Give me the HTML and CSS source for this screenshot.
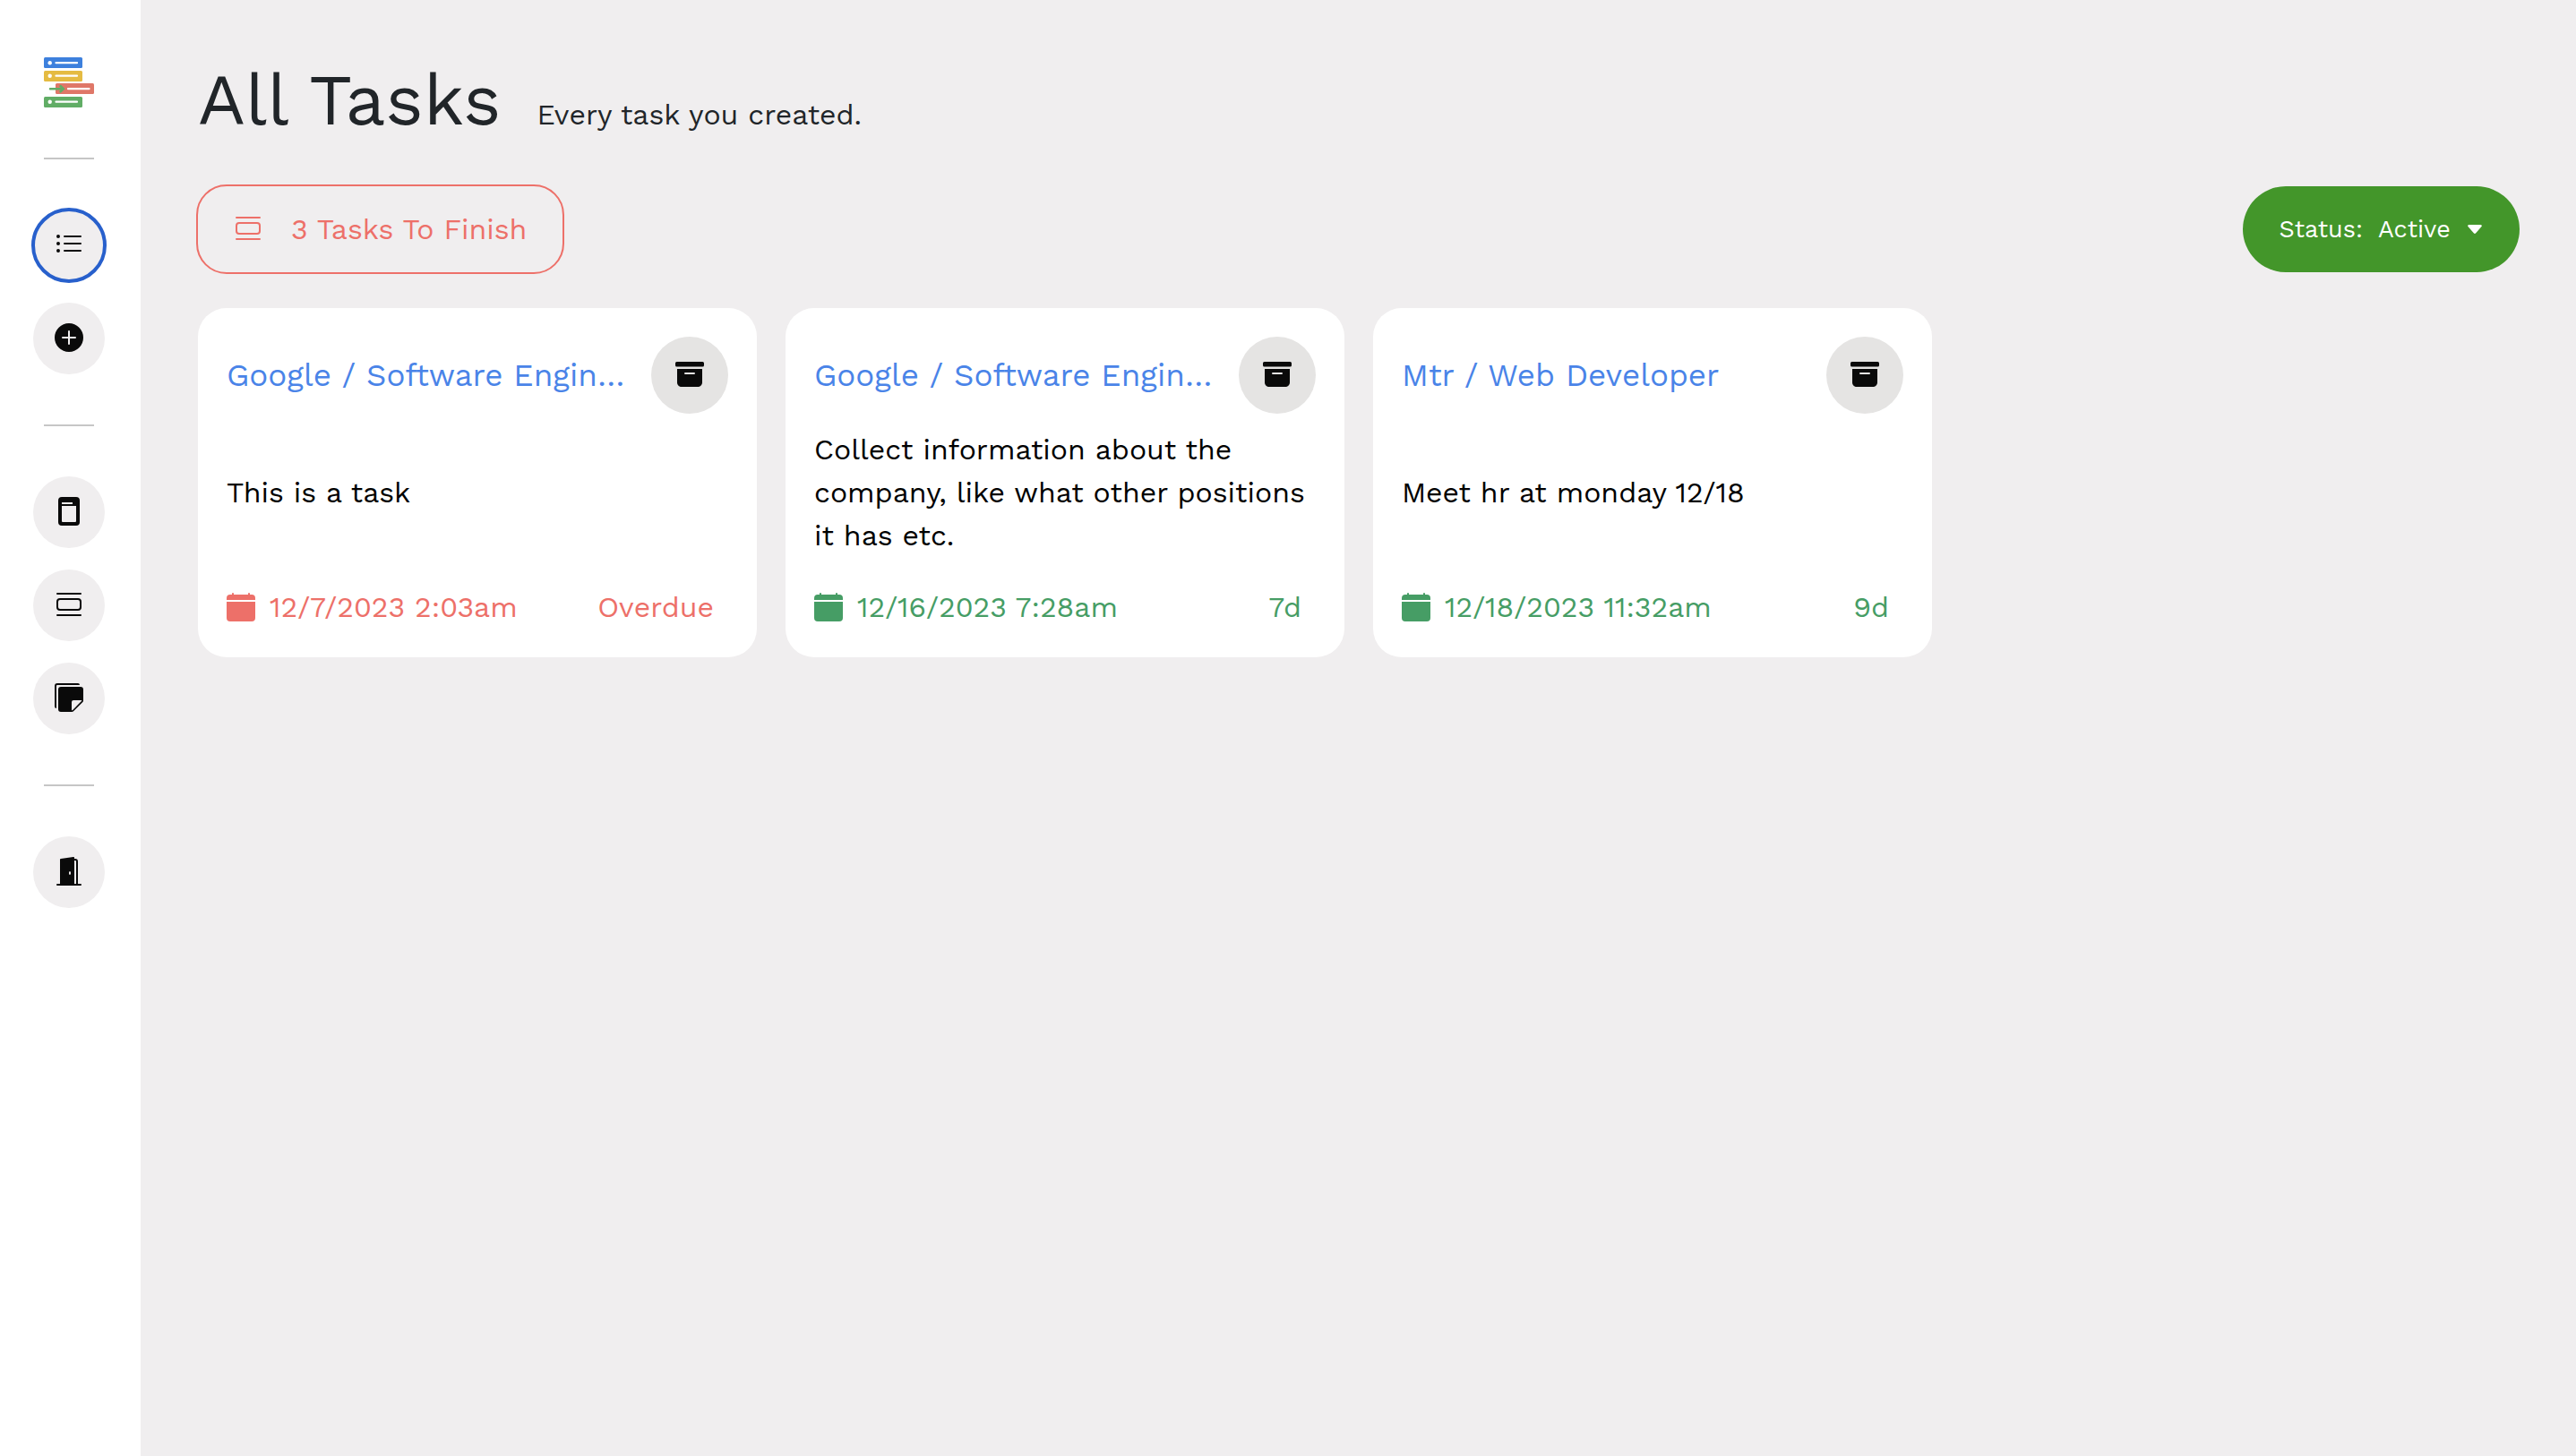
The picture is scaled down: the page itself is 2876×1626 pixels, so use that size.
FILE: index.html
```html
<!DOCTYPE html>
<html lang="en">
<head>
<meta charset="utf-8">
<meta name="viewport" content="width=device-width, initial-scale=1">
<title>All Tasks</title>
<link rel="stylesheet" href="styles.css">
</head>
<body>
<svg class="sprite" aria-hidden="true">
  <symbol id="i-list" viewBox="0 0 16 16"><path fill-rule="evenodd" d="M5 12a.5.5 0 0 1 .5-.5h9a.5.5 0 0 1 0 1h-9A.5.5 0 0 1 5 12m0-4a.5.5 0 0 1 .5-.5h9a.5.5 0 0 1 0 1h-9A.5.5 0 0 1 5 8m0-4a.5.5 0 0 1 .5-.5h9a.5.5 0 0 1 0 1h-9A.5.5 0 0 1 5 4m-3 1a1 1 0 1 0 0-2 1 1 0 0 0 0 2m0 4a1 1 0 1 0 0-2 1 1 0 0 0 0 2m0 4a1 1 0 1 0 0-2 1 1 0 0 0 0 2"/></symbol>
  <symbol id="i-plus" viewBox="0 0 16 16"><path d="M16 8A8 8 0 1 1 0 8a8 8 0 0 1 16 0M8.500 4.500a.5.5 0 0 0-1 0v3h-3a.5.5 0 0 0 0 1h3v3a.5.5 0 0 0 1 0v-3h3a.5.5 0 0 0 0-1h-3z"/></symbol>
  <symbol id="i-board" viewBox="0 0 16 16"><path fill-rule="evenodd" d="M4 0h8a2 2 0 0 1 2 2v12a2 2 0 0 1-2 2H4a2 2 0 0 1-2-2V2a2 2 0 0 1 2-2M4 3v1h6V3zM4 5v8.500a.5.5 0 0 0 .5.5h7a.5.5 0 0 0 .5-.5V5z"/></symbol>
  <symbol id="i-view" viewBox="0 0 16 16"><path d="M3 4.500h10a2 2 0 0 1 2 2v3a2 2 0 0 1-2 2H3a2 2 0 0 1-2-2v-3a2 2 0 0 1 2-2m0 1a1 1 0 0 0-1 1v3a1 1 0 0 0 1 1h10a1 1 0 0 0 1-1v-3a1 1 0 0 0-1-1zM1 2a.5.5 0 0 1 .5-.5h13a.5.5 0 0 1 0 1h-13A.5.5 0 0 1 1 2m0 12a.5.5 0 0 1 .5-.5h13a.5.5 0 0 1 0 1h-13A.5.5 0 0 1 1 14"/></symbol>
  <symbol id="i-notes" viewBox="0 0 16 16"><path d="M0 1.500V13a1 1 0 0 0 1 1V1.500a.5.5 0 0 1 .5-.5H14a1 1 0 0 0-1-1H1.500A1.500 1.500 0 0 0 0 1.500"/><path d="M3.500 2A1.500 1.500 0 0 0 2 3.500v11A1.500 1.500 0 0 0 3.500 16h6.086a1.500 1.500 0 0 0 1.060-.44l4.915-4.914A1.500 1.500 0 0 0 16 9.586V3.500A1.500 1.500 0 0 0 14.500 2zm6 8.500a1 1 0 0 1 1-1h4.396a.25.25 0 0 1 .177.427l-5.146 5.146a.25.25 0 0 1-.427-.177z"/></symbol>
  <symbol id="i-door" viewBox="0 0 16 16"><path d="M1.500 15a.5.5 0 0 0 0 1h13a.5.5 0 0 0 0-1H13V2.500A1.500 1.500 0 0 0 11.500 1H11V.5a.5.5 0 0 0-.57-.495l-7 1A.5.5 0 0 0 3 1.500V15zM11 2h.5a.5.5 0 0 1 .5.5V15h-1zm-2.500 8c-.276 0-.5-.448-.5-1s.224-1 .5-1 .5.448.5 1-.224 1-.5 1"/></symbol>
  <symbol id="i-archive" viewBox="0 0 16 16"><path d="M12.643 15C13.979 15 15 13.845 15 12.500V5H1v7.500C1 13.845 2.021 15 3.357 15zM5.500 7h5a.5.5 0 0 1 0 1h-5a.5.5 0 0 1 0-1M.8 1a.8.8 0 0 0-.8.8V3a.8.8 0 0 0 .8.8h14.400A.8.8 0 0 0 16 3V1.800a.8.8 0 0 0-.8-.8z"/></symbol>
  <symbol id="i-calendar" viewBox="0 0 16 16"><path d="M3.500 0a.5.5 0 0 1 .5.5V1h8V.5a.5.5 0 0 1 1 0V1h1a2 2 0 0 1 2 2v11a2 2 0 0 1-2 2H2a2 2 0 0 1-2-2V5h16V4H0V3a2 2 0 0 1 2-2h1V.5a.5.5 0 0 1 .5-.5"/></symbol>
</svg>

<div class="app">
  <nav class="sidebar" aria-label="Main">
    <a class="logo" href="#" aria-label="Home">
      <svg viewBox="0 0 56 56" width="56" height="56">
        <rect x="0" y="0" width="43" height="12" rx="1.500" fill="#3d80dd"/>
        <rect x="0" y="15" width="43" height="12" rx="1.500" fill="#e5bb42"/>
        <rect x="13" y="29" width="43" height="12" rx="1.500" fill="#df7768"/>
        <rect x="0" y="44" width="43" height="12" rx="1.500" fill="#61ad66"/>
        <g fill="#fff"><circle cx="6.700" cy="6.200" r="2.200"/><circle cx="6.700" cy="20.800" r="2.200"/><circle cx="6.700" cy="49.800" r="2.200"/></g>
        <path d="M13.500 6.200h23.500M13.500 20.700h23.500M27 35.200h23.500M13.500 49.700h23.500" stroke="#fff" stroke-width="2.200" stroke-linecap="round"/>
        <path d="M7 35.200h13M18.500 32l3.300 3.200-3.300 3.200" stroke="#61ad66" stroke-width="2.500" fill="none" stroke-linecap="round"/>
      </svg>
    </a>
    <hr class="divider">
    <div class="nav-group">
      <a class="nav-link nav-link--active" href="#" aria-label="All tasks" aria-current="page"><svg class="icon"><use href="#i-list"/></svg></a>
      <a class="nav-link" href="#" aria-label="Add"><svg class="icon"><use href="#i-plus"/></svg></a>
    </div>
    <hr class="divider">
    <div class="nav-group">
      <a class="nav-link" href="#" aria-label="Jobs"><svg class="icon"><use href="#i-board"/></svg></a>
      <a class="nav-link" href="#" aria-label="Tasks"><svg class="icon"><use href="#i-view"/></svg></a>
      <a class="nav-link" href="#" aria-label="Notes"><svg class="icon"><use href="#i-notes"/></svg></a>
    </div>
    <hr class="divider">
    <div class="nav-group">
      <a class="nav-link" href="#" aria-label="Log out"><svg class="icon"><use href="#i-door"/></svg></a>
    </div>
  </nav>

  <main class="main">
    <header class="page-header">
      <h1 class="page-title">All Tasks</h1>
      <p class="page-subtitle">Every task you created.</p>
    </header>

    <div class="toolbar">
      <button class="finish" type="button"><svg class="icon"><use href="#i-view"/></svg>3 Tasks To Finish</button>
      <div class="status">
        <label for="status">Status:</label>
        <select class="status-select" id="status"><option>Active</option></select>
        <svg class="caret" viewBox="0 0 20 20" aria-hidden="true"><path d="M3.500 5h13a1.200 1.200 0 0 1 1 2l-6.300 7.300a1.600 1.600 0 0 1-2.400 0L2.500 7a1.200 1.200 0 0 1 1-2z"/></svg>
      </div>
    </div>

    <section class="cards" aria-label="Tasks">
      <article class="card">
        <div class="card-head">
          <h2 class="card-title"><a href="#">Google / Software Engineer</a></h2>
          <button class="archive" type="button" aria-label="Archive"><svg class="icon"><use href="#i-archive"/></svg></button>
        </div>
        <p class="card-text">This is a task</p>
        <div class="card-foot card-foot--late"><svg class="icon"><use href="#i-calendar"/></svg><time>12/7/2023 2:03am</time><span class="due">Overdue</span></div>
      </article>
      <article class="card">
        <div class="card-head">
          <h2 class="card-title"><a href="#">Google / Software Engineer</a></h2>
          <button class="archive" type="button" aria-label="Archive"><svg class="icon"><use href="#i-archive"/></svg></button>
        </div>
        <p class="card-text">Collect information about the company, like what other positions it has etc.</p>
        <div class="card-foot"><svg class="icon"><use href="#i-calendar"/></svg><time>12/16/2023 7:28am</time><span class="due">7d</span></div>
      </article>
      <article class="card">
        <div class="card-head">
          <h2 class="card-title"><a href="#">Mtr / Web Developer</a></h2>
          <button class="archive" type="button" aria-label="Archive"><svg class="icon"><use href="#i-archive"/></svg></button>
        </div>
        <p class="card-text">Meet hr at monday 12/18</p>
        <div class="card-foot"><svg class="icon"><use href="#i-calendar"/></svg><time>12/18/2023 11:32am</time><span class="due">9d</span></div>
      </article>
    </section>
  </main>
</div>
</body>
</html>
```
FILE: styles.css
```css
* {
  box-sizing: border-box;
}

body {
  margin: 0;
  background: #f0eeef;
  color: #212529;
  font: 400 32px/48px "Work Sans", Inter, "Liberation Sans", sans-serif;
}

h1, h2, p {
  margin: 0;
  font-weight: 400;
}

a {
  color: inherit;
  text-decoration: none;
}

button, select {
  margin: 0;
  border: 0;
  background: none;
  color: inherit;
  font: inherit;
  cursor: pointer;
}

.sprite {
  display: none;
}

.icon {
  flex: none;
  width: 32px;
  height: 32px;
  fill: currentColor;
}

.app {
  display: flex;
  min-height: 100vh;
}

/* Sidebar */
.sidebar {
  flex: none;
  display: flex;
  flex-direction: column;
  align-items: center;
  gap: 56px;
  width: 157px;
  padding: 64px 3px 64px 0;
  background: #fff;
}

.logo {
  display: flex;
}

.divider {
  width: 56px;
  height: 2px;
  margin: 0;
  border: 0;
  background: #c6c6c6;
}

.nav-group {
  display: flex;
  flex-direction: column;
  gap: 24px;
}

.nav-link {
  display: flex;
  align-items: center;
  justify-content: center;
  width: 80px;
  height: 80px;
  padding-bottom: 2px;
  border-radius: 50%;
  background: #f0eeef;
  color: #0a0a0a;
}

.nav-link--active {
  padding-bottom: 4px;
  outline: 4px solid #2860cc;
  outline-offset: -2px;
}

/* Page */
.main {
  flex: 1;
  min-width: 0;
  padding: 64px 63px 64px 64px;
}

.page-header {
  display: flex;
  align-items: baseline;
  gap: 40px;
  margin-bottom: 48px;
}

.page-title {
  font-size: 80px;
  line-height: 96px;
}

.toolbar {
  display: flex;
  align-items: center;
  justify-content: space-between;
  margin-bottom: 40px;
}

.finish {
  display: flex;
  align-items: center;
  gap: 32px;
  height: 96px;
  padding: 0 40px;
  border-radius: 32px;
  outline: 2px solid #ed7069;
  color: #ed7069;
}

.finish .icon {
  margin-bottom: 2px;
}

.status {
  display: flex;
  align-items: center;
  gap: 17px;
  height: 96px;
  padding: 0 40px;
  border-radius: 48px;
  background: #43962a;
  color: #fff;
  font-size: 27px;
}

.status-select {
  appearance: none;
  padding: 0;
}

.caret {
  width: 20px;
  height: 20px;
  fill: currentColor;
}

/* Cards */
.cards {
  display: grid;
  grid-template-columns: repeat(4, minmax(0, 1fr));
  gap: 32px;
}

.card {
  display: flex;
  flex-direction: column;
  padding: 32px;
  border-radius: 32px;
  background: #fff;
  color: #000;
}

.card-head {
  display: flex;
  align-items: center;
  justify-content: space-between;
  gap: 24px;
  margin-bottom: 16px;
}

.card-title {
  overflow: hidden;
  color: #4a84e8;
  font-size: 35px;
  text-overflow: ellipsis;
  white-space: nowrap;
}

.archive {
  flex: none;
  display: flex;
  align-items: center;
  justify-content: center;
  width: 86px;
  height: 86px;
  padding: 0 0 2px;
  border-radius: 50%;
  background: #e5e4e3;
  color: #0a0a0a;
}

.card-text {
  display: flex;
  flex: 1;
  align-items: center;
  min-height: 144px;
  margin-bottom: 32px;
}

.card-foot {
  display: flex;
  align-items: center;
  gap: 16px;
  padding-right: 16px;
  color: #469d65;
}

.card-foot--late {
  color: #ed7069;
}

.due {
  margin-left: auto;
}
```
